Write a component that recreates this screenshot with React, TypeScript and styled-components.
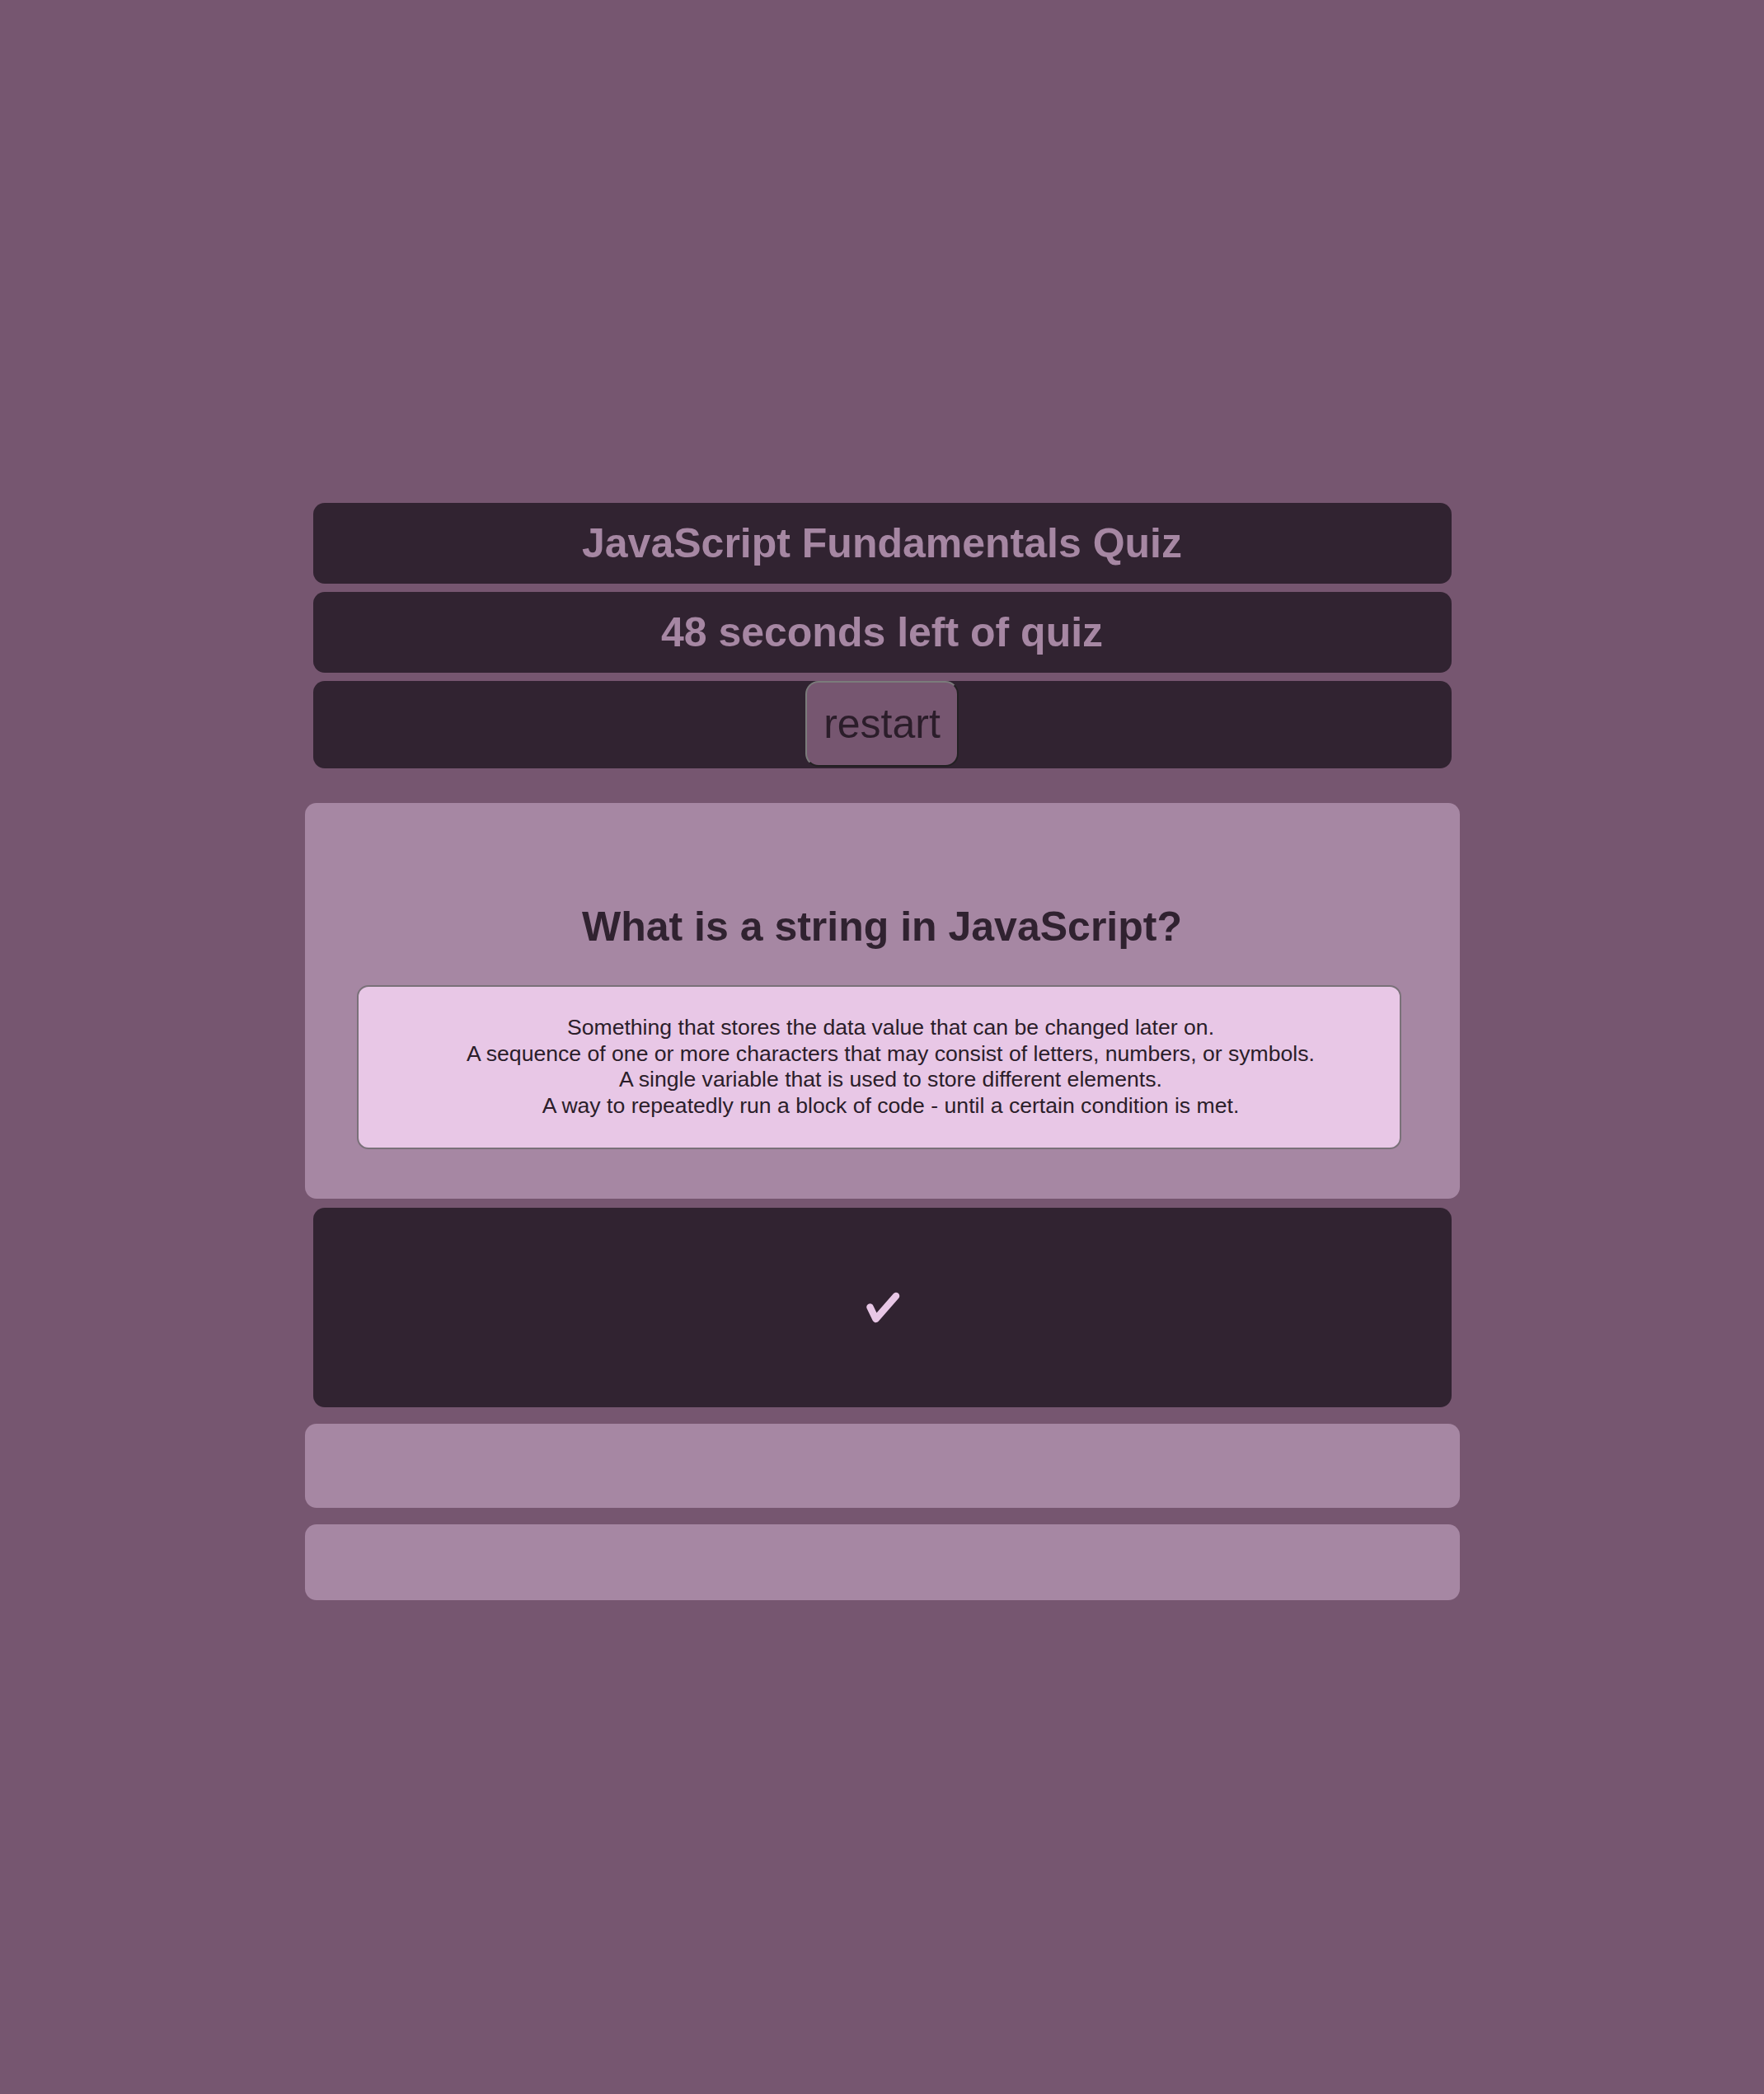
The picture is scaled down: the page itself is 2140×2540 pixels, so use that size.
import React from "react";
import styled, { createGlobalStyle } from "styled-components";

const GlobalStyle = createGlobalStyle`
  html, body {
    margin: 0;
    padding: 0;
    background: #765670;
  }
  body {
    font-family: "Liberation Sans", Arial, Helvetica, sans-serif;
  }
  * { box-sizing: border-box; }
`;

const Page = styled.main`
  width: 1401px;
  margin: 0 auto;
  padding-top: 610px;
  display: flex;
  flex-direction: column;
`;

const DarkBar = styled.header<{ $gap?: number }>`
  margin: 0 10px ${(p) => p.$gap ?? 10}px;
  padding: 20px;
  background: #312331;
  border-radius: 14px;
  text-align: center;
`;

const BarTitle = styled.h1`
  margin: 0;
  font-size: 50px;
  font-weight: 700;
  line-height: normal;
  color: #a687a3;
`;

const ControlBar = styled.div`
  margin: 0 10px 42px;
  height: 106px;
  background: #312331;
  border-radius: 14px;
  display: flex;
  justify-content: center;
  align-items: flex-start;
`;

const RestartButton = styled.button`
  font-family: "Liberation Sans", Arial, Helvetica, sans-serif;
  font-size: 50px;
  line-height: normal;
  color: #2b1d2a;
  background: #765670;
  padding: 21px 20px;
  border-width: 2px;
  border-style: solid;
  border-color: #7b7b7b #222022 #222022 #7b7b7b;
  border-radius: 16px;
  cursor: pointer;
`;

const QuestionCard = styled.section`
  margin-bottom: 11px;
  padding: 60px 71px 60px 63px;
  background: #a687a3;
  border-radius: 14px;
`;

const Question = styled.h2`
  margin: 61px -8px 42px 0;
  font-size: 50px;
  font-weight: 700;
  line-height: normal;
  text-align: center;
  color: #302230;
`;

const Options = styled.ul`
  list-style: none;
  margin: 0;
  padding: 34px 32px 34px 61px;
  background: #e8c7e6;
  border: 2px solid #7a7179;
  border-radius: 14px;
  text-align: center;
  color: #2b1d2a;
  font-size: 26.6px;
  line-height: 31.7px;
`;

const Option = styled.li`
  margin: 0;
`;

const ResultPanel = styled.div`
  margin: 0 10px 20px;
  height: 242px;
  background: #312331;
  border-radius: 14px;
  display: flex;
  align-items: center;
  justify-content: center;
`;

const CheckIcon = styled.svg`
  width: 42px;
  height: 38px;
  margin-left: 2px;
`;

const EmptyPanel = styled.div<{ $h: number }>`
  height: ${(p) => p.$h}px;
  margin-bottom: 20px;
  background: #a687a3;
  border-radius: 14px;
`;

const options = [
  "Something that stores the data value that can be changed later on.",
  "A sequence of one or more characters that may consist of letters, numbers, or symbols.",
  "A single variable that is used to store different elements.",
  "A way to repeatedly run a block of code - until a certain condition is met.",
];

export default function App() {
  return (
    <>
      <GlobalStyle />
      <Page>
        <DarkBar>
          <BarTitle>JavaScript Fundamentals Quiz</BarTitle>
        </DarkBar>
        <DarkBar>
          <BarTitle as="h2">48 seconds left of quiz</BarTitle>
        </DarkBar>
        <ControlBar>
          <RestartButton type="button">restart</RestartButton>
        </ControlBar>
        <QuestionCard>
          <Question>What is a string in JavaScript?</Question>
          <Options>
            {options.map((o) => (
              <Option key={o}>{o}</Option>
            ))}
          </Options>
        </QuestionCard>
        <ResultPanel>
          <CheckIcon viewBox="0 0 42 38" aria-label="correct">
            <path
              d="M5.5 18.5 L12.5 33 L37 5"
              fill="none"
              stroke="#e8c7e6"
              strokeWidth="8.5"
              strokeLinecap="round"
              strokeLinejoin="round"
            />
          </CheckIcon>
        </ResultPanel>
        <EmptyPanel $h={102} />
        <EmptyPanel $h={92} />
      </Page>
    </>
  );
}
